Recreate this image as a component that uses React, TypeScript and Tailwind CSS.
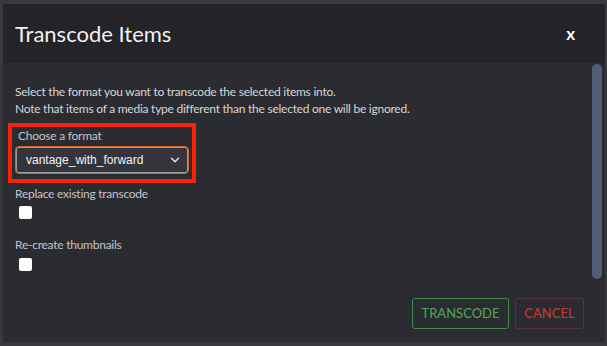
import { ChevronDown } from 'lucide-react';

export default function App() {
  return (
    <div
      className="w-[607px] h-[346px] bg-[#3a3a3e] pt-[4px] pl-[3px] overflow-hidden"
      style={{ fontFamily: 'Lato, "Noto Sans", sans-serif' }}
    >
      <div className="w-[602px] h-[338px] bg-[#2b2c31] flex flex-col">
        <div className="h-[59px] bg-[#232328] flex items-center justify-between pl-[12px] pr-[30px] shrink-0">
          <h2 className="text-[22px] text-[#f0f0f0] leading-none">Transcode Items</h2>
          <span className="text-[17px] font-bold text-white leading-none">x</span>
        </div>

        <div className="flex flex-1 min-h-0">
          <div className="flex-1 flex flex-col">
            <div className="pt-[20px] pl-[12px] text-[12px] leading-[17px] tracking-[-0.25px] text-[#d6d6d8]">
              <p>Select the format you want to transcode the selected items into.</p>
              <p>Note that items of a media type different than the selected one will be ignored.</p>
            </div>

            <div className="mt-[6px] ml-[5px] w-[188px] border-[4px] border-[#f5230b] px-[3px] pb-[5px]">
              <p className="text-[12px] leading-[18px] tracking-[-0.25px] text-[#c4c4c8] pl-[3px]">Choose a format</p>
              <div className="mt-[1px] h-[28px] rounded-[4px] border border-[#d2652c] ring-1 ring-inset ring-[#e8e0d8]/60 bg-[#34353c] flex items-center justify-between pl-[10px] pr-[6px]">
                <span
                  className="text-[12px] text-[#f2f2f2]"
                  style={{ fontFamily: '"Liberation Sans", Arial, sans-serif' }}
                >
                  vantage_with_forward
                </span>
                <ChevronDown className="w-[14px] h-[14px] text-[#e0e0e0]" strokeWidth={2.5} />
              </div>
            </div>

            <div className="pl-[12px] mt-[2px] text-[12px] leading-[18px] tracking-[-0.25px] text-[#c4c4c8]">
              <p>Replace existing transcode</p>
              <div className="mt-[3px] ml-[4px] w-[13px] h-[13px] bg-white rounded-[2px]" />
              <p className="mt-[17px]">Re-create thumbnails</p>
              <div className="mt-[4px] ml-[4px] w-[13px] h-[13px] bg-white rounded-[2px]" />
            </div>

            <div className="mt-auto mb-[13px] flex justify-end gap-[6px] pr-[8px]">
              <button className="w-[97px] h-[31px] rounded-[3px] border border-[#3f8a48] text-[#4fa85a] text-[13px]">
                TRANSCODE
              </button>
              <button className="w-[69px] h-[31px] rounded-[3px] border border-[#5c3234] text-[#cf3a30] text-[13px]">
                CANCEL
              </button>
            </div>
          </div>

          <div className="w-[13px] shrink-0 pt-[1px] pr-[3px]">
            <div className="w-[10px] h-[215px] rounded-full bg-[#525d76]" />
          </div>
        </div>
      </div>
    </div>
  );
}
